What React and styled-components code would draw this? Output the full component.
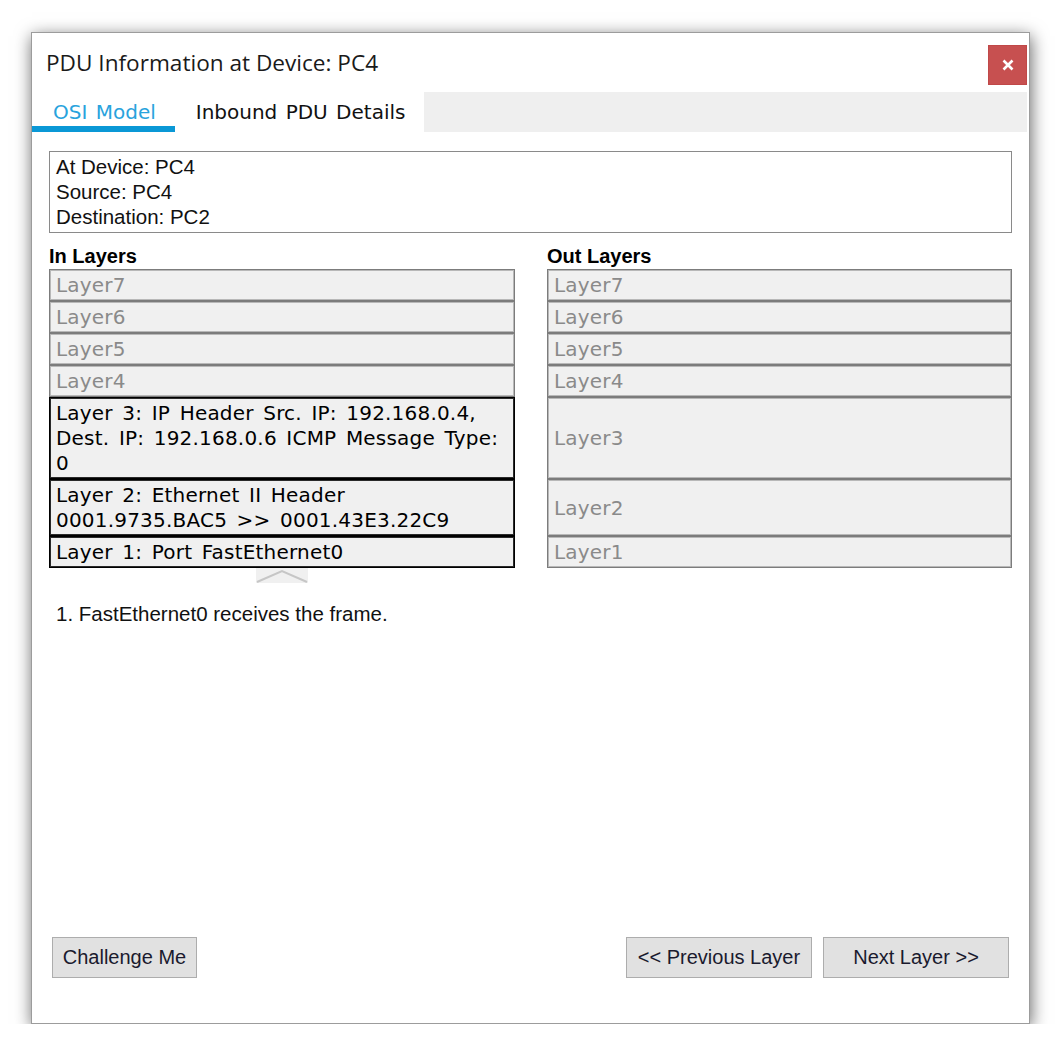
import React from 'react';
import styled, { createGlobalStyle } from 'styled-components';

const GlobalStyle = createGlobalStyle`
  body {
    margin: 0;
    background: #ffffff;
  }
`;

const Page = styled.div`
  padding: 32px 0 0 31px;
`;

const Window = styled.div`
  width: 997px;
  height: 990px;
  border: 1px solid #9c9c9c;
  background: #ffffff;
  box-shadow: 1px 4px 16px rgba(0, 0, 0, 0.6);
  display: flex;
  flex-direction: column;
`;

const TitleBar = styled.div`
  height: 59px;
  display: flex;
  align-items: flex-start;
  justify-content: space-between;
  padding: 0 2px 0 14px;
`;

const Title = styled.div`
  font-family: 'Open Sans', 'Liberation Sans', sans-serif;
  font-size: 22.6px;
  color: #1a1a1a;
  margin-top: 15px;
  line-height: 30px;
`;

const CloseButton = styled.button`
  width: 39px;
  height: 40px;
  margin-top: 12px;
  border: 1px solid #c04848;
  background: #c75050;
  display: flex;
  align-items: center;
  justify-content: center;
  padding: 0;
`;

const TabBar = styled.div`
  height: 40px;
  display: flex;
  padding-right: 2px;
`;

const Tab = styled.div`
  padding: 0 19px 0 21px;
  font-family: 'DejaVu Sans', Verdana, sans-serif;
  font-size: 20px;
  word-spacing: 2px;
  line-height: 40px;
  color: ${p => (p.$active ? '#29a3dd' : '#111111')};
  box-shadow: ${p => (p.$active ? 'inset 0 -6px 0 #0a98d6' : 'none')};
`;

const TabFiller = styled.div`
  flex: 1;
  background: #efefef;
`;

const Body = styled.div`
  flex: 1;
  display: flex;
  flex-direction: column;
  padding: 19px 17px 0 17px;
`;

const InfoBox = styled.div`
  height: 78px;
  border: 1px solid #8a8a8a;
  padding: 2px 6px 0 6px;
  font-family: 'Liberation Sans', Arial, sans-serif;
  font-size: 20.5px;
  line-height: 25px;
  color: #111111;
`;

const Layers = styled.div`
  display: grid;
  grid-template-columns: 466px 465px;
  column-gap: 32px;
  margin-top: 12px;
`;

const ColumnHeader = styled.div`
  font-family: 'Liberation Sans', Arial, sans-serif;
  font-weight: bold;
  font-size: 20px;
  line-height: 22px;
  padding-bottom: 2px;
  color: #000000;
`;

const LayerRow = styled.div`
  border: 1px solid ${p => (p.$active ? '#000000' : '#7c7c7c')};
  box-shadow: inset 0 0 0 1px ${p => (p.$active ? '#2a2a2a' : '#b8b8b8')};
  background: #f0f0f0;
  padding: 3px 6px 2px 6px;
  font-family: 'DejaVu Sans', Verdana, sans-serif;
  font-size: 20px;
  letter-spacing: 0.2px;
  word-spacing: 3px;
  line-height: 25px;
  white-space: nowrap;
  color: ${p => (p.$active ? '#000000' : '#8a8a8a')};
  display: flex;
  flex-direction: column;
  justify-content: ${p => (p.$center ? 'center' : 'flex-start')};
  min-height: 25px;
`;

const ArrowCell = styled.div`
  display: flex;
  justify-content: center;
`;

const Message = styled.div`
  margin-top: 20px;
  padding-left: 7px;
  font-family: 'Liberation Sans', Arial, sans-serif;
  font-size: 20.5px;
  line-height: 22px;
  color: #111111;
`;

const Spacer = styled.div`
  flex: 1;
`;

const Footer = styled.div`
  display: flex;
  align-items: center;
  padding: 0 3px 0 3px;
  margin-bottom: 45px;
  gap: 11px;
`;

const Button = styled.button`
  height: 41px;
  width: ${p => p.$width}px;
  margin-right: ${p => (p.$pushRight ? 'auto' : '0')};
  background: #e1e1e1;
  border: 1px solid #adadad;
  font-family: 'Liberation Sans', Arial, sans-serif;
  font-size: 20px;
  color: #1a1a2e;
  padding: 0;
`;

const inLayers = [
  ['Layer7'],
  ['Layer6'],
  ['Layer5'],
  ['Layer4'],
  ['Layer 3: IP Header Src. IP: 192.168.0.4,', 'Dest. IP: 192.168.0.6 ICMP Message Type:', '0'],
  ['Layer 2: Ethernet II Header', '0001.9735.BAC5 >> 0001.43E3.22C9'],
  ['Layer 1: Port FastEthernet0'],
];

const outLayers = ['Layer7', 'Layer6', 'Layer5', 'Layer4', 'Layer3', 'Layer2', 'Layer1'];

function CloseIcon() {
  return (
    <svg width="12" height="12" viewBox="0 0 12 12">
      <path d="M1.5 1.5 L10.5 10.5 M10.5 1.5 L1.5 10.5" stroke="#ffffff" strokeWidth="2.6" />
    </svg>
  );
}

function UpArrow() {
  return (
    <svg width="52" height="15" viewBox="0 0 52 15">
      <rect x="0" y="0" width="52" height="15" fill="#f0f0f0" />
      <polyline points="1,14 26,3 51,14" fill="none" stroke="#c6c6c6" strokeWidth="2" />
    </svg>
  );
}

export default function App() {
  return (
    <>
      <GlobalStyle />
      <Page>
        <Window>
          <TitleBar>
            <Title>PDU Information at Device: PC4</Title>
            <CloseButton>
              <CloseIcon />
            </CloseButton>
          </TitleBar>
          <TabBar>
            <Tab $active>OSI Model</Tab>
            <Tab>Inbound PDU Details</Tab>
            <TabFiller />
          </TabBar>
          <Body>
            <InfoBox>
              <div>At Device: PC4</div>
              <div>Source: PC4</div>
              <div>Destination: PC2</div>
            </InfoBox>
            <Layers>
              <ColumnHeader>In Layers</ColumnHeader>
              <ColumnHeader>Out Layers</ColumnHeader>
              {inLayers.map((lines, i) => (
                <React.Fragment key={i}>
                  <LayerRow $active={i >= 4}>
                    {lines.map(line => (
                      <span key={line}>{line}</span>
                    ))}
                  </LayerRow>
                  <LayerRow $center>{outLayers[i]}</LayerRow>
                </React.Fragment>
              ))}
              <ArrowCell>
                <UpArrow />
              </ArrowCell>
            </Layers>
            <Message>1. FastEthernet0 receives the frame.</Message>
            <Spacer />
            <Footer>
              <Button $width={145} $pushRight>Challenge Me</Button>
              <Button $width={186}>&lt;&lt; Previous Layer</Button>
              <Button $width={186}>Next Layer &gt;&gt;</Button>
            </Footer>
          </Body>
        </Window>
      </Page>
    </>
  );
}
